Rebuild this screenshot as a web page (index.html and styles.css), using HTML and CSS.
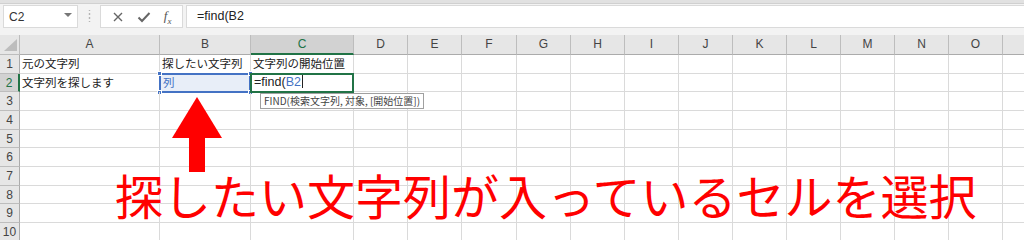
FILE: index.html
```html
<!DOCTYPE html>
<html lang="ja">
<head>
    <meta charset="UTF-8">
    <title>FIND</title>
    <link rel="stylesheet" href="styles.css">
</head>
<body>
  <div class="top-edge"></div>
  <div class="formula-bar">
    <div class="name-box">
      <span>C2</span>
      <svg class="caret" width="8" height="5" viewBox="0 0 8 5"><path d="M0 0h8L4 4z" fill="#777"/></svg>
    </div>
    <div class="grip"></div>
    <div class="fx-tools">
      <svg width="12" height="12" viewBox="0 0 12 12"><path d="M2 2l8 8M10 2l-8 8" stroke="#666" stroke-width="1.4"/></svg>
      <svg width="14" height="12" viewBox="0 0 14 12"><path d="M1.5 6.5l3.5 3.5 7.5-8" stroke="#666" stroke-width="2" fill="none"/></svg>
      <span class="fx">f<sub>x</sub></span>
    </div>
    <div class="formula-input">=find(B2</div>
  </div>

  <div class="sheet" id="sheet"></div>

  <div class="arrow">
    <div class="arrow-head"></div>
    <div class="arrow-shaft"></div>
  </div>
  <div class="callout">探したい文字列が入っているセルを選択</div>

<script>
  const cols = ["A","B","C","D","E","F","G","H","I","J","K","L","M","N","O",""];
  const sheet = document.getElementById("sheet");

  function cell(cls, html){
    const d = document.createElement("div");
    d.className = cls;
    if (html) d.innerHTML = html;
    sheet.appendChild(d);
    return d;
  }

  cell("corner", '<svg width="16" height="14" viewBox="0 0 16 14"><path d="M15 1v12H2z" fill="#bdbdbd"/></svg>');
  cols.forEach(c => cell("col-head" + (c === "C" ? " active" : ""), c));

  const data = {
    1: {A: "元の文字列", B: "探したい文字列", C: "文字列の開始位置"},
    2: {A: "文字列を探します"}
  };

  for (let r = 1; r <= 10; r++) {
    cell("row-head" + (r === 2 ? " active" : ""), r);
    cols.forEach(c => {
      const v = (data[r] && data[r][c]) || "";
      let cls = "cell";
      let html = v;
      if (r === 2 && c === "B") {
        cls += " picked";
        html = '列<i class="h tl"></i><i class="h tr"></i><i class="h bl"></i><i class="h br"></i>';
      }
      if (r === 2 && c === "C") {
        cls += " editing";
        html = '=find(<span class="ref">B2</span><span class="cursor"></span>' +
               '<div class="tip">FIND(検索文字列, 対象, [開始位置])</div>';
      }
      cell(cls, html);
    });
  }
</script>
</body>
</html>
```

FILE: styles.css
```css
*{
  margin: 0;
  padding: 0;
  box-sizing: border-box;
}

body{
  width: 1024px;
  height: 240px;
  overflow: hidden;
  position: relative;
  background-color: white;
  font-family: "Noto Sans CJK JP", "Liberation Sans", sans-serif;
  color: #222;
}

.top-edge{
  height: 4px;
  background-color: #e1e1e1;
  border-bottom: 1px solid #d0d0d0;
}

.formula-bar{
  height: 31px;
  display: flex;
  align-items: flex-start;
  padding-top: 1px;
  background-color: #f3f3f3;
}

.name-box{
  width: 75px;
  height: 23px;
  margin-left: 3px;
  display: flex;
  align-items: center;
  justify-content: space-between;
  padding: 0 5px 0 5px;
  background-color: white;
  border: 1px solid #dadada;
  font-family: "Liberation Sans", sans-serif;
  font-size: 12px;
  color: #333;
}

.caret{
  margin-top: -2px;
}

.grip{
  width: 22px;
  height: 23px;
  background: radial-gradient(circle, #b5b5b5 0.8px, transparent 1.2px);
  background-size: 3px 4px;
  background-position: center 7px;
  background-repeat: repeat-y;
  background-clip: content-box;
  padding: 5px 0 6px;
}

.fx-tools{
  width: 83px;
  height: 23px;
  display: flex;
  align-items: center;
  justify-content: space-around;
  padding: 0 4px;
  background-color: white;
  border: 1px solid #dadada;
}

.fx{
  font-family: "Liberation Serif", serif;
  font-style: italic;
  font-size: 13px;
  color: #555;
}

.fx sub{
  font-size: 9px;
}

.formula-input{
  flex: 1;
  height: 23px;
  margin-left: 3px;
  padding: 3px 0 0 10px;
  background-color: white;
  border: 1px solid #dadada;
  border-right: none;
  font-family: "Liberation Sans", sans-serif;
  font-size: 12.5px;
  color: #222;
}

.sheet{
  display: grid;
  grid-template-columns: 20px 140px 91px 103px 54px 54px 55px 54px 54px 54px 54px 54px 54px 54px 54px 54px 30px;
  grid-template-rows: 20px 19px 18px 19px 19px 18px 19px 19px 18px 19px 19px;
}

.corner{
  background-color: #e6e6e6;
  border-right: 1px solid #bdbdbd;
  border-bottom: 1px solid #bdbdbd;
  display: flex;
  align-items: flex-end;
  justify-content: flex-end;
  padding: 0 1px 2px 0;
}

.col-head{
  background-color: #e6e6e6;
  border-right: 1px solid #bdbdbd;
  border-bottom: 1px solid #ababab;
  font-family: "Liberation Sans", sans-serif;
  font-size: 12px;
  color: #444;
  text-align: center;
  line-height: 19px;
}

.col-head.active{
  background-color: #d2d2d2;
  border-bottom: 2px solid #217346;
  color: #217346;
}

.row-head{
  background-color: #e6e6e6;
  border-right: 1px solid #ababab;
  border-bottom: 1px solid #bdbdbd;
  font-family: "Liberation Sans", sans-serif;
  font-size: 12px;
  color: #444;
  text-align: center;
  line-height: 18px;
}

.row-head.active{
  background-color: #d2d2d2;
  border-right: 2px solid #217346;
  color: #217346;
}

.cell{
  position: relative;
  border-right: 1px solid #dadada;
  border-bottom: 1px solid #dadada;
  font-size: 11.5px;
  line-height: 17px;
  padding-left: 2px;
  white-space: nowrap;
  color: #222;
}

.cell.picked{
  background-color: #e8eef8;
  border: 2px solid #4472c4;
  margin: -1px 0 -1px -1px;
  padding-left: 2px;
  line-height: 15px;
  color: #4472c4;
}

.h{
  position: absolute;
  width: 5px;
  height: 5px;
  background-color: #4472c4;
  border: 1px solid white;
}

.tl{ left: -4px; top: -4px; }
.tr{ right: -4px; top: -4px; }
.bl{ left: -4px; bottom: -4px; }
.br{ right: -4px; bottom: -4px; }

.cell.editing{
  border: 2px solid #217346;
  margin: -1px 0 -1px -1px;
  padding-left: 2px;
  line-height: 15px;
  font-family: "Liberation Sans", sans-serif;
  font-size: 12.5px;
  z-index: 2;
}

.ref{
  color: #4472c4;
}

.cursor{
  display: inline-block;
  width: 1px;
  height: 13px;
  margin-left: 1px;
  vertical-align: -2px;
  background-color: #222;
}

.tip{
  position: absolute;
  left: 8px;
  top: 18px;
  padding: 0 3px;
  background-color: white;
  border: 1px solid #a0a0a0;
  font-family: "Noto Sans CJK JP", sans-serif;
  font-size: 10px;
  line-height: 14px;
  color: #444;
}

.arrow{
  position: absolute;
  left: 171px;
  top: 97px;
  width: 51px;
  display: flex;
  flex-direction: column;
  align-items: center;
}

.arrow-head{
  width: 0;
  height: 0;
  border-left: 25px solid transparent;
  border-right: 25px solid transparent;
  border-bottom: 41px solid #ff0000;
}

.arrow-shaft{
  width: 16px;
  height: 34px;
  background-color: #ff0000;
}

.callout{
  position: absolute;
  left: 115px;
  top: 160px;
  font-family: "Noto Sans CJK JP", sans-serif;
  font-size: 48px;
  line-height: 68px;
  color: #ff0000;
  white-space: nowrap;
}
```
